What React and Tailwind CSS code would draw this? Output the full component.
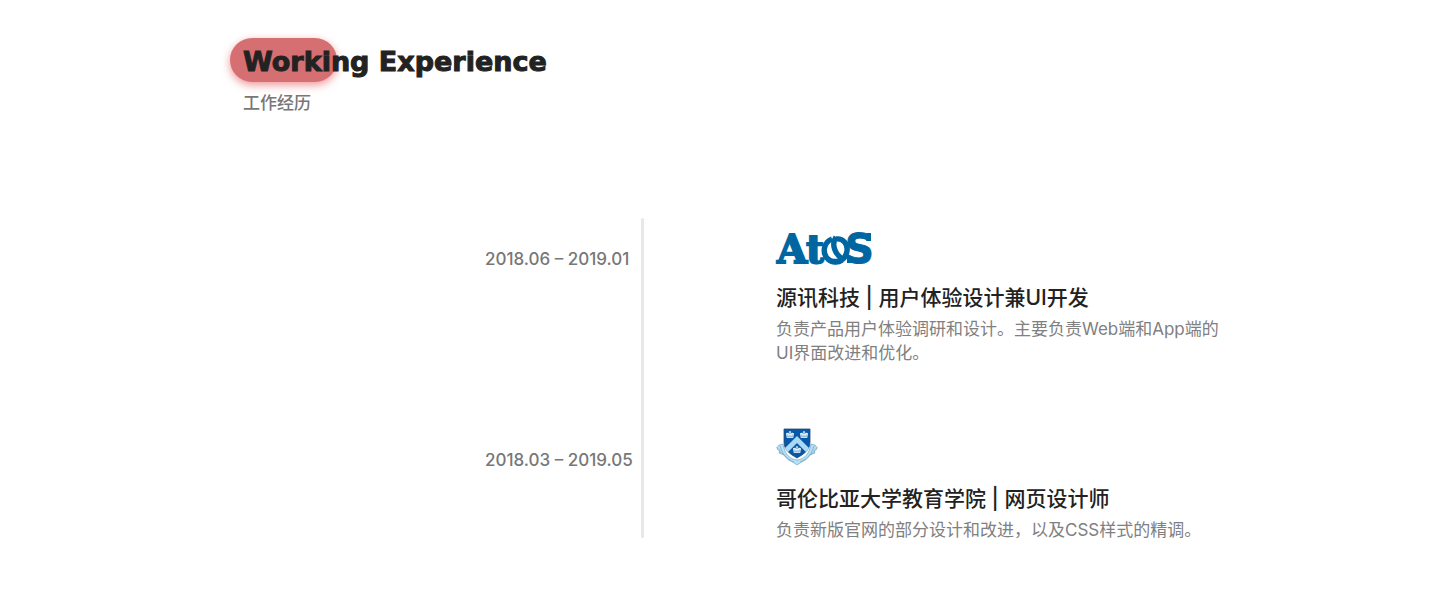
function AtosLogo() {
  return (
    <svg
      viewBox="0 0 98 34"
      className="h-[34px] w-[98px] overflow-visible"
      role="img"
      aria-label="Atos"
      fill="#0066a1"
      stroke="#0066a1"
    >
      <g fontFamily="DejaVu Serif, serif" fontWeight="700" fontSize="39">
        <text x="1" y="32" strokeWidth="1.8">A</text>
        <text x="30" y="32" strokeWidth="1.8">t</text>
        <text x="69" y="32" fontFamily="DejaVu Sans, sans-serif" fontSize="40" strokeWidth="1">S</text>
        <path d="M92 2 H95 V10 H90 Z M71 25 H75 L77 32 H71 Z" stroke="none" />
      </g>
      <g fill="none" strokeWidth="5.4" strokeLinecap="butt">
        <path d="M56 8 C48 11 46 21 51 27 C55 32 62 32 66 29" />
        <path d="M60 8 C67 7 72 13 71 20 C70 28 63 32 57 30" />
        <path d="M60 6 C55 13 59 24 67 28" />
      </g>
    </svg>
  );
}

function Crown({ x, y }) {
  return (
    <g transform={`translate(${x} ${y})`} fill="#e6f4fc">
      <path d="M-3.2 3 L-4 -1.5 Q-2.5 -3 -0.5 -1 L-0.5 -2.5 H-1.3 V-3.3 H-0.5 V-4 H0.5 V-3.3 H1.3 V-2.5 H0.5 V-1 Q2.5 -3 4 -1.5 L3.2 3 Z" />
      <path d="M-2 1 L-2.3 -0.5 M0 1 V0 M2 1 L2.3 -0.5 M-3 1.8 H3" stroke="#1660ae" strokeWidth="0.5" />
    </g>
  );
}

function ColumbiaCrest() {
  return (
    <svg viewBox="0 0 42 38" className="h-[38px] w-[42px]" role="img" aria-label="Columbia University">
      <g fill="#b5e0f7" stroke="#6a9bb8" strokeWidth="0.6">
        <path d="M3 17 L7 16 L8 20 C10 27 14 31 21 32 C28 31 32 27 34 20 L35 16 L39 17 L41.5 20 L38 22 L39 25 L34 27 C31 32 27 33 24 35 L21 37 L18 35 C15 33 11 32 8 27 L3 25 L4 22 L0.5 20 Z" />
        <path d="M4 18 C6 25 10 31 18 34 M38 18 C36 25 32 31 24 34 M1 21 L8 27 M41 21 L34 27" fill="none" />
      </g>
      <path d="M8 1 H34 V14 C34 22 28 26 21 30 C14 26 8 22 8 14 Z" fill="#0758a8" stroke="#234b70" strokeWidth="0.8" />
      <path d="M21 8 L33 20 Q32 22 30 24 L21 15 L12 24 Q10 22 9 20 Z" fill="#a9daf5" />
      <Crown x={14} y={7} />
      <Crown x={28} y={7} />
      <Crown x={21} y={22} />
    </svg>
  );
}

const jobs = [
  {
    period: "2018.06 – 2019.01",
    Logo: AtosLogo,
    title: "源讯科技 | 用户体验设计兼UI开发",
    description: "负责产品用户体验调研和设计。主要负责Web端和App端的UI界面改进和优化。",
  },
  {
    period: "2018.03 – 2019.05",
    Logo: ColumbiaCrest,
    title: "哥伦比亚大学教育学院 | 网页设计师",
    description: "负责新版官网的部分设计和改进，以及CSS样式的精调。",
  },
];

function Job({ period, Logo, title, description }) {
  return (
    <li className="grid grid-cols-[156px_1fr] gap-x-[135px]">
      <time className="pt-5 text-[17px] leading-6 font-medium text-[#777]">{period}</time>
      <article>
        <div className="flex h-[38px] items-end">
          <Logo />
        </div>
        <h2 className="mt-[18px] text-[21px] leading-[30px] font-medium text-[#222]">{title}</h2>
        <p className="mt-1 text-[17px] leading-6 font-normal text-[#808080]">{description}</p>
      </article>
    </li>
  );
}

export default function App() {
  return (
    <main className="mx-auto max-w-[1000px] pt-[38px] pb-[54px] font-['Inter','Noto_Sans_CJK_SC',sans-serif]">
      <header className="pl-[23px]">
        <div className="relative flex h-11 items-center">
          <span
            aria-hidden="true"
            className="absolute inset-y-0 -left-[13px] w-[107px] rounded-full bg-[#d66f72] shadow-[0_3px_9px_rgba(224,80,84,0.6)]"
          />
          <h1 className="relative pt-1 font-['DejaVu_Sans',sans-serif] text-[27px] leading-10 font-bold text-[#222] [-webkit-text-stroke:1px_#222]">
            Working Experience
          </h1>
        </div>
        <p className="mt-[9px] text-[17px] leading-6 font-medium text-[#777]">工作经历</p>
      </header>
      <section className="mt-[103px] grid pl-[265px]">
        <div aria-hidden="true" className="col-start-1 row-start-1 mb-1 ml-[156px] w-[3px] rounded-full bg-[#e8e8e8]" />
        <ol className="col-start-1 row-start-1 grid gap-[63px] pt-[9px]">
          {jobs.map((job) => (
            <Job key={job.period} {...job} />
          ))}
        </ol>
      </section>
    </main>
  );
}
